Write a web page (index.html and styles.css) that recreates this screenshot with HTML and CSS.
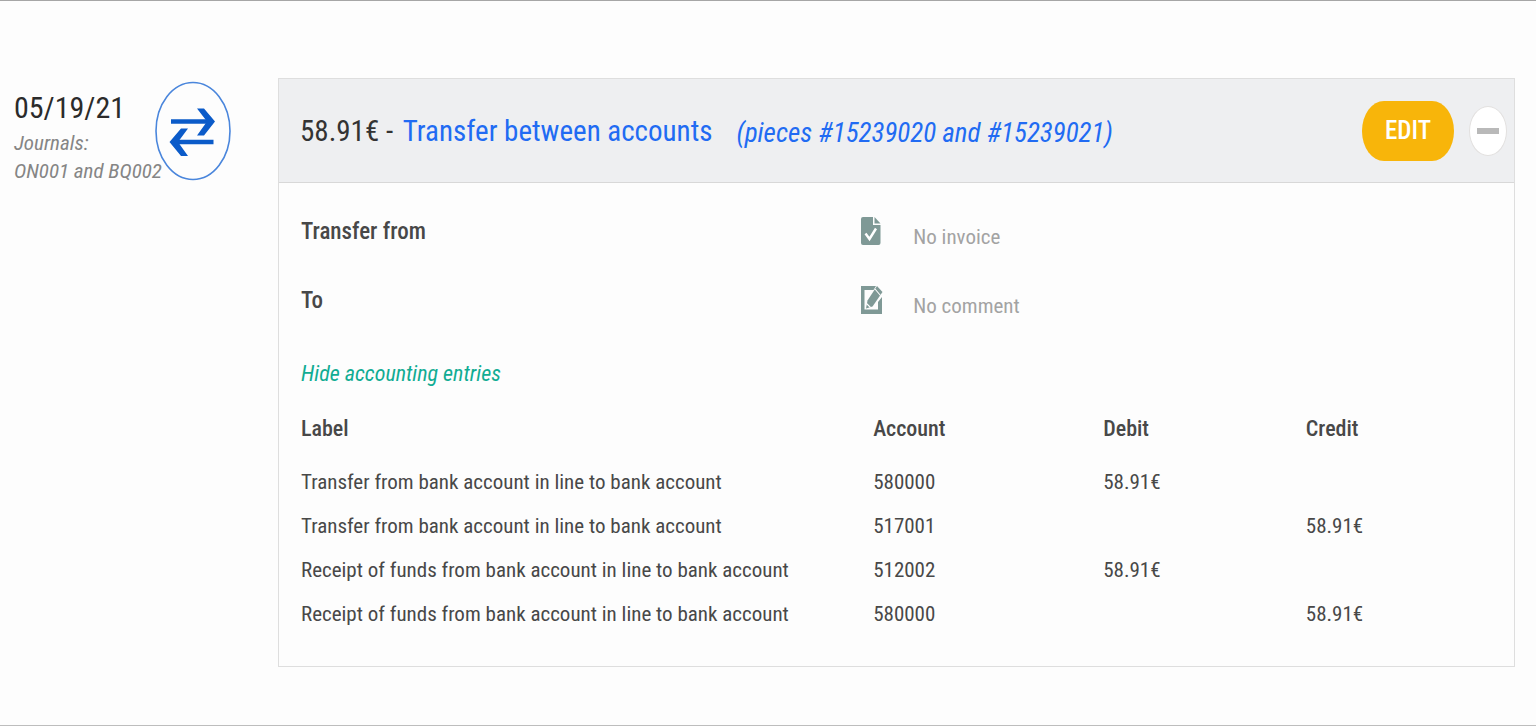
FILE: index.html
```html
<!DOCTYPE html>
<html lang="en">
<head>
  <meta charset="UTF-8">
  <meta name="viewport" content="width=device-width, initial-scale=1">
  <title>Transfer between accounts</title>
  <link rel="stylesheet" href="styles.css">
</head>

<body>

<main class="entry">

  <!-- Date and journals -->
  <aside class="entry-side">
    <div class="entry-meta">
      <time class="entry-date" datetime="2021-05-19">05/19/21</time>
      <p class="entry-journals">Journals:<br>ON001 and BQ002</p>
    </div>
    <svg class="transfer-icon" viewBox="0 0 76 100" aria-hidden="true">
      <ellipse cx="38" cy="50" rx="37" ry="48.5" fill="none" stroke="#4a86dc" stroke-width="1.6"/>
      <g fill="none" stroke="#0b5bc9" stroke-width="4.6">
        <path d="M16 40.500H57"/>
        <path d="M18 61H58.500"/>
      </g>
      <path d="M42 27.500h7l11 13-11 14h-7l10-14z" fill="#0b5bc9"/>
      <path d="M33 47.500h-7L14.500 61 26 75h7L23 61z" fill="#0b5bc9"/>
    </svg>
  </aside>

  <section class="card">
    <header class="card-header">
      <h1 class="card-title">58.91€ - <a href="#">Transfer between accounts</a></h1>
      <a class="card-pieces" href="#">(pieces #15239020 and #15239021)</a>
      <button class="btn-edit" type="button">EDIT</button>
      <button class="btn-collapse" type="button" aria-label="Collapse"><span class="minus"></span></button>
    </header>

    <div class="card-body">
      <div class="details">
        <strong class="detail-label">Transfer from</strong>
        <div class="detail-note">
          <svg class="note-icon" viewBox="0 0 22 28" aria-hidden="true">
            <path d="M2 0h10v8h7.500v18a2 2 0 0 1-2 2H2a2 2 0 0 1-2-2V2a2 2 0 0 1 2-2z" fill="#7f9996"/>
            <path d="M13.500 0 19.500 6.500h-6z" fill="#7f9996"/>
            <path d="M4.500 16.500l4 5.500 6.500-10.500" fill="none" stroke="#fff" stroke-width="2.400"/>
          </svg>
          <span>No invoice</span>
        </div>

        <strong class="detail-label">To</strong>
        <div class="detail-note">
          <svg class="note-icon" viewBox="0 0 22 28" aria-hidden="true">
            <path d="M0 0h15l-2.500 4H3.500v19.500h13.500V16l4-5v17H0z" fill="#7f9996"/>
            <path d="M16 0 21.500 6 11.500 20.500 5 22.500 6.500 14.500z" fill="#7f9996"/>
            <path d="M14 3l5.500 6.500M5.500 17.500l4 4" stroke="#fff" stroke-width="1.100"/>
          </svg>
          <span>No comment</span>
        </div>
      </div>

      <a class="toggle-entries" href="#entries">Hide accounting entries</a>

      <table class="entries" id="entries">
        <thead>
          <tr>
            <th class="col-label" scope="col">Label</th>
            <th class="col-account" scope="col">Account</th>
            <th class="col-debit" scope="col">Debit</th>
            <th scope="col">Credit</th>
          </tr>
        </thead>
        <tbody>
          <tr>
            <td>Transfer from bank account in line to bank account</td>
            <td>580000</td>
            <td>58.91€</td>
            <td></td>
          </tr>
          <tr>
            <td>Transfer from bank account in line to bank account</td>
            <td>517001</td>
            <td></td>
            <td>58.91€</td>
          </tr>
          <tr>
            <td>Receipt of funds from bank account in line to bank account</td>
            <td>512002</td>
            <td>58.91€</td>
            <td></td>
          </tr>
          <tr>
            <td>Receipt of funds from bank account in line to bank account</td>
            <td>580000</td>
            <td></td>
            <td>58.91€</td>
          </tr>
        </tbody>
      </table>
    </div>
  </section>

</main>

</body>
</html>
```

FILE: styles.css
```css
* {
  box-sizing: border-box;
}
body {
  margin: 0;
  background: #fdfdfd;
  color: #484848;
  font-family: "Roboto Condensed", "Liberation Sans Narrow", "Liberation Sans", sans-serif;
  font-size: 21px;
  line-height: 28px;
}
a {
  text-decoration: none;
}
.entry {
  display: flex;
  align-items: flex-start;
  min-height: 100vh;
  padding: 77px 21px 57px 14px;
  border-top: 1px solid #a6a6a6;
  border-bottom: 1px solid #bdbdbd;
}

/* date column */
.entry-side {
  display: flex;
  flex: 0 0 264px;
  padding-top: 3px;
}
.entry-meta {
  width: 141px;
  padding-top: 8px;
  white-space: nowrap;
}
.entry-date {
  display: block;
  color: #2b2b2b;
  font-size: 30px;
  line-height: 38px;
}
.entry-journals {
  margin: 2px 0 0;
  color: #858585;
  font-style: italic;
}
.transfer-icon {
  flex: none;
  width: 76px;
  height: 100px;
}

/* card */
.card {
  flex: 1;
  border: 1px solid #dedede;
}
.card-header {
  display: flex;
  align-items: center;
  height: 104px;
  padding: 0 7px 0 21px;
  background: #eeeff1;
  border-bottom: 1px solid #d8d8d8;
}
.card-title {
  margin: 0;
  color: #333;
  font-size: 29px;
  font-weight: normal;
  line-height: 40px;
}
.card-title a,
.card-pieces {
  color: #216bf3;
}
.card-title a {
  margin-left: 3px;
}
.card-pieces {
  margin-left: 24px;
  padding-top: 4px;
  font-size: 27px;
  font-style: italic;
}
.btn-edit {
  width: 92px;
  height: 60px;
  margin-left: auto;
  padding: 0;
  background: #f8b50a;
  border: none;
  border-radius: 22px / 30px;
  color: #fff;
  font-family: inherit;
  font-size: 25px;
  font-weight: 500;
  cursor: pointer;
}
.btn-collapse {
  display: flex;
  align-items: center;
  justify-content: center;
  width: 38px;
  height: 50px;
  margin-left: 15px;
  padding: 0;
  background: #fff;
  border: 1px solid #e2e0df;
  border-radius: 50%;
  cursor: pointer;
}
.minus {
  width: 22px;
  height: 6px;
  background: #b9b9b9;
}
.card-body {
  padding: 32px 21px 30px 22px;
}
.details {
  display: grid;
  grid-template-columns: 47% 1fr;
  row-gap: 33px;
}
.detail-label {
  font-size: 23px;
  font-weight: 500;
  line-height: 34px;
}
.detail-note {
  display: flex;
  align-items: flex-start;
  gap: 30px;
  color: #a3a3a3;
}
.detail-note span {
  padding-top: 8px;
}
.note-icon {
  width: 22px;
  height: 28px;
  margin-top: 2px;
}
.toggle-entries {
  display: inline-block;
  margin-top: 40px;
  color: #11ac93;
  font-size: 22px;
  font-style: italic;
}

/* accounting entries */
.entries {
  width: 100%;
  margin-top: 18px;
  border-collapse: collapse;
  table-layout: fixed;
}
.entries th,
.entries td {
  height: 44px;
  padding: 0;
  text-align: left;
}
.entries th {
  height: 54px;
  padding-bottom: 8px;
  font-size: 22px;
  font-weight: 500;
}
.col-label {
  width: 48%;
}
.col-account {
  width: 19.3%;
}
.col-debit {
  width: 17%;
}
```
